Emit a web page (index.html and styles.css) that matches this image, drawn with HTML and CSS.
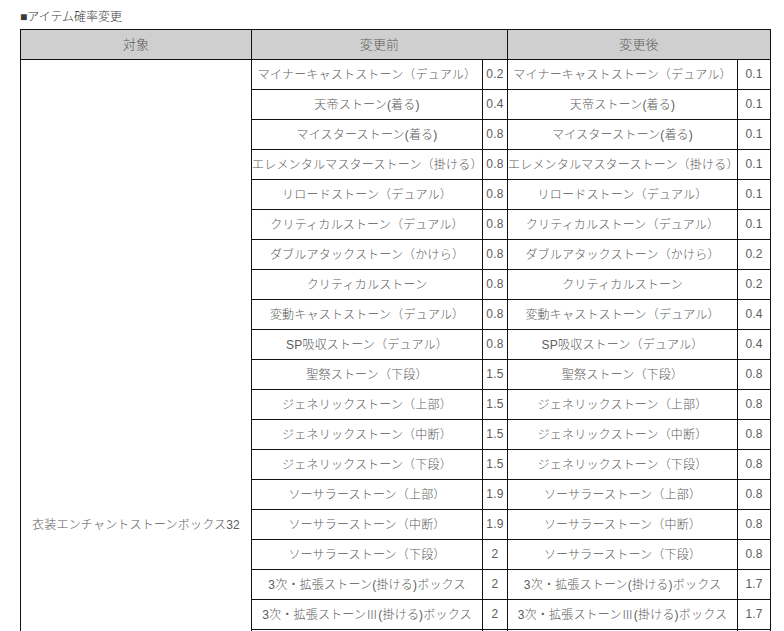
FILE: index.html
```html
<!DOCTYPE html>
<html lang="ja">
<head>
<meta charset="utf-8">
<title>アイテム確率変更</title>
<link rel="stylesheet" href="styles.css">
</head>
<body>
<div class="wrap">
<h3 class="title">■アイテム確率変更</h3>
<table class="rates">
<colgroup>
<col class="c-target"><col class="c-name"><col class="c-num"><col class="c-name2"><col class="c-num2">
</colgroup>
<thead>
<tr><th>対象</th><th colspan="2">変更前</th><th colspan="2">変更後</th></tr>
</thead>
<tbody>
<tr><td rowspan="31" class="target">衣装エンチャントストーンボックス32</td><td>マイナーキャストストーン（デュアル）</td><td>0.2</td><td>マイナーキャストストーン（デュアル）</td><td>0.1</td></tr>
<tr><td>天帝ストーン(着る)</td><td>0.4</td><td>天帝ストーン(着る)</td><td>0.1</td></tr>
<tr><td>マイスターストーン(着る)</td><td>0.8</td><td>マイスターストーン(着る)</td><td>0.1</td></tr>
<tr><td>エレメンタルマスターストーン（掛ける）</td><td>0.8</td><td>エレメンタルマスターストーン（掛ける）</td><td>0.1</td></tr>
<tr><td>リロードストーン（デュアル）</td><td>0.8</td><td>リロードストーン（デュアル）</td><td>0.1</td></tr>
<tr><td>クリティカルストーン（デュアル）</td><td>0.8</td><td>クリティカルストーン（デュアル）</td><td>0.1</td></tr>
<tr><td>ダブルアタックストーン（かけら）</td><td>0.8</td><td>ダブルアタックストーン（かけら）</td><td>0.2</td></tr>
<tr><td>クリティカルストーン</td><td>0.8</td><td>クリティカルストーン</td><td>0.2</td></tr>
<tr><td>変動キャストストーン（デュアル）</td><td>0.8</td><td>変動キャストストーン（デュアル）</td><td>0.4</td></tr>
<tr><td>SP吸収ストーン（デュアル）</td><td>0.8</td><td>SP吸収ストーン（デュアル）</td><td>0.4</td></tr>
<tr><td>聖祭ストーン（下段）</td><td>1.5</td><td>聖祭ストーン（下段）</td><td>0.8</td></tr>
<tr><td>ジェネリックストーン（上部）</td><td>1.5</td><td>ジェネリックストーン（上部）</td><td>0.8</td></tr>
<tr><td>ジェネリックストーン（中断）</td><td>1.5</td><td>ジェネリックストーン（中断）</td><td>0.8</td></tr>
<tr><td>ジェネリックストーン（下段）</td><td>1.5</td><td>ジェネリックストーン（下段）</td><td>0.8</td></tr>
<tr><td>ソーサラーストーン（上部）</td><td>1.9</td><td>ソーサラーストーン（上部）</td><td>0.8</td></tr>
<tr><td>ソーサラーストーン（中断）</td><td>1.9</td><td>ソーサラーストーン（中断）</td><td>0.8</td></tr>
<tr><td>ソーサラーストーン（下段）</td><td>2</td><td>ソーサラーストーン（下段）</td><td>0.8</td></tr>
<tr><td>3次・拡張ストーン(掛ける)ボックス</td><td>2</td><td>3次・拡張ストーン(掛ける)ボックス</td><td>1.7</td></tr>
<tr><td>3次・拡張ストーンⅢ(掛ける)ボックス</td><td>2</td><td>3次・拡張ストーンⅢ(掛ける)ボックス</td><td>1.7</td></tr>
<tr><td>3次・拡張ストーン(着る)ボックス</td><td>2</td><td>3次・拡張ストーン(着る)ボックス</td><td>1.7</td></tr>
<tr><td>3次・拡張ストーンⅡ(着る)ボックス</td><td>2</td><td>3次・拡張ストーンⅡ(着る)ボックス</td><td>1.7</td></tr>
<tr><td>3次・拡張ストーン(デュアル)ボックス</td><td>2</td><td>3次・拡張ストーン(デュアル)ボックス</td><td>1.7</td></tr>
<tr><td>力ストーン（上段）</td><td>3</td><td>力ストーン（上段）</td><td>3.5</td></tr>
<tr><td>知力ストーン（上段）</td><td>3</td><td>知力ストーン（上段）</td><td>3.5</td></tr>
<tr><td>敏捷ストーン（上段）</td><td>3</td><td>敏捷ストーン（上段）</td><td>3.5</td></tr>
<tr><td>器用ストーン（上段）</td><td>3</td><td>器用ストーン（上段）</td><td>3.5</td></tr>
<tr><td>体力ストーン（上段）</td><td>3</td><td>体力ストーン（上段）</td><td>3.5</td></tr>
<tr><td>幸運ストーン（上段）</td><td>3</td><td>幸運ストーン（上段）</td><td>3.5</td></tr>
<tr><td>HPストーン（中段）</td><td>4</td><td>HPストーン（中段）</td><td>4.5</td></tr>
<tr><td>SPストーン（中段）</td><td>4</td><td>SPストーン（中段）</td><td>4.5</td></tr>
<tr><td>回避ストーン（下段）</td><td>4</td><td>回避ストーン（下段）</td><td>4.5</td></tr>
</tbody>
</table>
</div>
</body>
</html>
```

FILE: styles.css
```css
html, body {
  margin: 0;
  padding: 0;
  background: #ffffff;
}

.wrap {
  padding-left: 20px;
}

.title {
  margin: 0;
  padding-top: 11px;
  height: 18px;
  font-family: "Liberation Serif", "Noto Sans CJK JP", serif;
  font-size: 12px;
  line-height: 12px;
  font-weight: 300;
  color: #3a3a3a;
}

.rates {
  border-collapse: collapse;
  table-layout: fixed;
  width: 751px;
  font-family: "Liberation Sans", "Noto Sans CJK JP", sans-serif;
  font-size: 12px;
  font-weight: 300;
  letter-spacing: 0.2px;
  color: #5c5c5c;
}

.c-target { width: 231px; }
.c-name { width: 231px; }
.c-num { width: 25px; }
.c-name2 { width: 230px; }
.c-num2 { width: 33px; }

.rates th,
.rates td {
  border: 1px solid #111111;
  padding: 0 0 2px 0;
  height: 27px;
  text-align: center;
  vertical-align: middle;
  white-space: nowrap;
  overflow: hidden;
}

.rates th {
  background: #d0cfcf;
  font-weight: 300;
  font-size: 13px;
}

.rates td.target {
  font-size: 12px;
}
```
